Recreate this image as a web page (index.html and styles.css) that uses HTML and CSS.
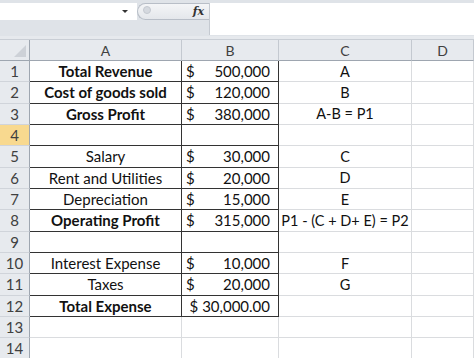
FILE: index.html
```html
<!DOCTYPE html>
<html lang="en">
<head>
    <meta charset="UTF-8">
    <meta name="viewport" content="width=device-width, initial-scale=1.0">
    <title>Income Statement</title>
    <link rel="stylesheet" href="styles.css">
</head>
<body>
    <div id="formula-bar">
        <div class="fb-left">
            <div class="fb-top">
                <div class="name-box"><span class="arrow"></span></div>
                <div class="fn-buttons"><span class="knob"></span><span class="fx">fx</span></div>
            </div>
        </div>
        <div class="formula-input"></div>
    </div>

    <div id="sheet">
        <div class="corner"></div>
        <div class="ch">A</div>
        <div class="ch">B</div>
        <div class="ch">C</div>
        <div class="ch">D</div>

        <div class="rh">1</div>
        <div class="cell a bold">Total Revenue</div>
        <div class="cell b money"><span>$</span><span>500,000</span></div>
        <div class="cell c">A</div>
        <div class="cell"></div>

        <div class="rh">2</div>
        <div class="cell a bold">Cost of goods sold</div>
        <div class="cell b money"><span>$</span><span>120,000</span></div>
        <div class="cell c">B</div>
        <div class="cell"></div>

        <div class="rh">3</div>
        <div class="cell a bold">Gross Profit</div>
        <div class="cell b money"><span>$</span><span>380,000</span></div>
        <div class="cell c">A-B = P1</div>
        <div class="cell"></div>

        <div class="rh active">4</div>
        <div class="cell a"></div>
        <div class="cell b"></div>
        <div class="cell c"></div>
        <div class="cell"></div>

        <div class="rh">5</div>
        <div class="cell a">Salary</div>
        <div class="cell b money"><span>$</span><span>30,000</span></div>
        <div class="cell c">C</div>
        <div class="cell"></div>

        <div class="rh">6</div>
        <div class="cell a">Rent and Utilities</div>
        <div class="cell b money"><span>$</span><span>20,000</span></div>
        <div class="cell c">D</div>
        <div class="cell"></div>

        <div class="rh">7</div>
        <div class="cell a">Depreciation</div>
        <div class="cell b money"><span>$</span><span>15,000</span></div>
        <div class="cell c">E</div>
        <div class="cell"></div>

        <div class="rh">8</div>
        <div class="cell a bold">Operating Profit</div>
        <div class="cell b money"><span>$</span><span>315,000</span></div>
        <div class="cell c">P1 - (C + D+ E) = P2</div>
        <div class="cell"></div>

        <div class="rh">9</div>
        <div class="cell a"></div>
        <div class="cell b"></div>
        <div class="cell c"></div>
        <div class="cell"></div>

        <div class="rh">10</div>
        <div class="cell a">Interest Expense</div>
        <div class="cell b money"><span>$</span><span>10,000</span></div>
        <div class="cell c">F</div>
        <div class="cell"></div>

        <div class="rh">11</div>
        <div class="cell a">Taxes</div>
        <div class="cell b money"><span>$</span><span>20,000</span></div>
        <div class="cell c">G</div>
        <div class="cell"></div>

        <div class="rh">12</div>
        <div class="cell a bold">Total Expense</div>
        <div class="cell b total">$ 30,000.00</div>
        <div class="cell c"></div>
        <div class="cell"></div>

        <div class="rh">13</div>
        <div class="cell"></div>
        <div class="cell"></div>
        <div class="cell"></div>
        <div class="cell"></div>

        <div class="rh">14</div>
        <div class="cell"></div>
        <div class="cell"></div>
        <div class="cell"></div>
        <div class="cell"></div>
    </div>
</body>
</html>
```

FILE: styles.css
```css
body {
    margin: 0;
    font-family: 'Lato', 'Liberation Sans', sans-serif;
    background-color: white;
    overflow: hidden;
}

/* formula bar */
#formula-bar {
    display: flex;
    height: 40px;
    box-sizing: border-box;
    padding-top: 3px;
    background-color: #dfe3e8;
    border-bottom: 1px solid #c9ced5;
    box-shadow: inset 0 -3px 0 #e6e9ed;
}

.fb-left {
    width: 209px;
}

.fb-top {
    display: flex;
    height: 17px;
}

.name-box {
    width: 137px;
    background-color: white;
    position: relative;
}

.arrow {
    position: absolute;
    right: 9px;
    top: 7px;
    border-left: 3px solid transparent;
    border-right: 3px solid transparent;
    border-top: 3px solid #333;
}

.fn-buttons {
    flex: 1;
    display: flex;
    align-items: center;
    justify-content: space-between;
    padding: 0 5px 0 5px;
    background: linear-gradient(#f4f5f7, #e4e7eb);
    border: 1px solid #b8bec7;
    border-right: none;
    border-radius: 9px 0 0 9px;
}

.knob {
    width: 6px;
    height: 6px;
    border-radius: 50%;
    background-color: #d5d9df;
    border: 1px solid #c4c9d0;
    margin-top: -4px;
}

.fx {
    font-family: 'DejaVu Serif', serif;
    font-style: italic;
    font-weight: bold;
    font-size: 11px;
    color: #333;
}

.formula-input {
    flex: 1;
    height: 32px;
    background-color: white;
    border-left: 1px solid #c5cad1;
}

/* sheet grid */
#sheet {
    display: grid;
    grid-template-columns: 30px 152px 97px 133px 1fr;
    grid-template-rows: 21px repeat(14, 21.33px);
}

#sheet > div {
    box-sizing: border-box;
    display: flex;
    align-items: center;
    justify-content: center;
    overflow: hidden;
    white-space: nowrap;
}

.corner,
.ch,
.rh {
    background-color: #e7eaee;
    color: #404040;
    font-size: 14px;
    border-right: 1px solid #c4c9d0;
    border-bottom: 1px solid #c4c9d0;
}

.ch {
    border-bottom-color: #9ea6b0;
}

.corner {
    position: relative;
    border-bottom-color: #9ea6b0;
    border-right-color: #9ea6b0;
}

.corner::after {
    content: '';
    position: absolute;
    right: 3px;
    bottom: 3px;
    width: 12px;
    height: 12px;
    background-color: #cdd1d7;
    clip-path: polygon(100% 0, 100% 100%, 0 100%);
}

.rh {
    font-size: 15px;
    border-right-color: #9ea6b0;
    border-bottom-color: #d0d4da;
}

.rh.active {
    background-color: #f8d98f;
}

.cell {
    font-size: 15px;
    color: #111;
    border-right: 1px solid #dadcdf;
    border-bottom: 1px solid #dadcdf;
    padding: 0 4px;
}

.c {
    font-size: 14.5px;
}

.a,
.b {
    border-right-color: #333;
    border-bottom-color: #333;
}

.bold {
    font-weight: bold;
}

#sheet > .money {
    justify-content: space-between;
    padding: 0 8px 0 4px;
}

#sheet > .total {
    justify-content: flex-end;
    padding-right: 8px;
}
```
